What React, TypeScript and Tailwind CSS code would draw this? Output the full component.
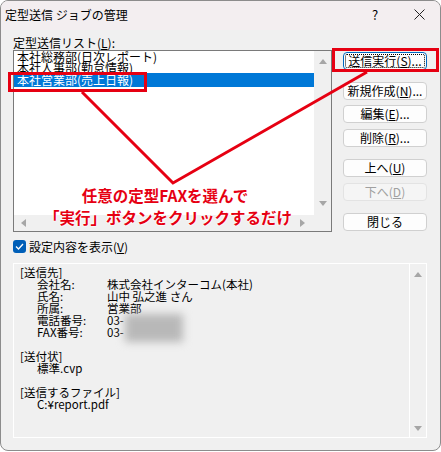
import React from "react";

const FONT = "font-['Noto_Sans_CJK_JP','Noto_Sans',sans-serif]";

function Tri({ dir }: { dir: "up" | "down" | "left" | "right" }) {
  const v = dir === "up" || dir === "down";
  const w = v ? 8 : 5;
  const h = v ? 5 : 8;
  const pts = {
    up: "0,5 4,0 8,5",
    down: "0,0 8,0 4,5",
    left: "5,0 5,8 0,4",
    right: "0,0 0,8 5,4",
  }[dir];
  return (
    <svg width={w} height={h} viewBox={`0 0 ${w} ${h}`}>
      <polygon points={pts} fill="#a6a6a6" />
    </svg>
  );
}

function Btn({
  children,
  className = "",
  primary = false,
  disabled = false,
}: {
  children: React.ReactNode;
  className?: string;
  primary?: boolean;
  disabled?: boolean;
}) {
  const tone = primary
    ? "border-[#0067c0] bg-[#fdfdfd] text-black"
    : disabled
    ? "border-[#e3e3e3] bg-[#f5f5f5] text-[#a0a0a0]"
    : "border-[#d0d0d0] bg-[#fdfdfd] text-black";
  return (
    <div
      className={`relative h-[18px] w-[84px] rounded-[4px] border flex items-center justify-center text-[12px] leading-none ${tone} ${className}`}
    >
      {primary && (
        <div className="absolute inset-[1px] border border-dotted border-black rounded-[2px]" />
      )}
      <span className="relative">{children}</span>
    </div>
  );
}

function DRow({ label, value, indent = true }: { label?: string; value?: React.ReactNode; indent?: boolean }) {
  return (
    <div className="flex h-[12px] leading-[12px] whitespace-nowrap">
      {indent && <div className="w-[17px]" />}
      {label !== undefined && <div className="w-[70px]">{label}</div>}
      {value !== undefined && <div>{value}</div>}
    </div>
  );
}

export default function App() {
  return (
    <div className={`relative w-[441px] h-[452px] bg-white ${FONT} text-black`}>
      <div className="w-[441px] h-[451px] rounded-[8px] border border-[#8c8c8c] bg-[#f0f0f0] overflow-hidden flex flex-col">
        {/* Title bar */}
        <div className="h-[29px] bg-[#f3eef0] flex items-center shrink-0">
          <div className="flex-1 pl-[4px] text-[12px] leading-none pb-[2px]">定型送信 ジョブの管理</div>
          <div className="w-[48px] flex justify-center text-[13px] leading-none pb-[2px]">?</div>
          <div className="w-[41px] flex justify-center pb-[2px]">
            <svg width="11" height="11" viewBox="0 0 11 11">
              <path d="M0.5 0.5 L10.5 10.5 M10.5 0.5 L0.5 10.5" stroke="#222" strokeWidth="1" />
            </svg>
          </div>
        </div>

        {/* Body */}
        <div className="pl-[12px] pr-[13px] pt-[6px] flex flex-col">
          <div className="h-[14px] text-[12px] leading-[14px]">
            定型送信リスト(<span className="underline">L</span>):
          </div>

          <div className="flex gap-[11px]">
            {/* List box */}
            <div className="w-[319px] h-[182px] border border-[#7a7a7a] bg-white flex flex-col">
              <div className="flex flex-1 min-h-0">
                <div className="flex-1 text-[12px] overflow-hidden">
                  <div className="h-[11px] leading-[11px] pl-[3px] whitespace-nowrap">本社総務部(日次レポート)</div>
                  <div className="h-[11px] leading-[11px] pl-[3px] whitespace-nowrap">本社人事部(勤怠情報)</div>
                  <div className="relative h-[14px] leading-[14px] pl-[3px] bg-[#0078d7] text-white whitespace-nowrap">本社営業部(売上日報)</div>
                </div>
                <div className="w-[17px] bg-[#f0f0f0] flex flex-col items-center justify-between pt-[8px] pb-[9px]">
                  <Tri dir="up" />
                  <Tri dir="down" />
                </div>
              </div>
              <div className="h-[16px] flex">
                <div className="flex-1 bg-[#f0f0f0] flex items-center justify-between pl-[7px] pr-[9px]">
                  <Tri dir="left" />
                  <Tri dir="right" />
                </div>
                <div className="w-[17px] bg-[#f0f0f0]" />
              </div>
            </div>

            {/* Buttons */}
            <div className="flex flex-col pt-[2px]">
              <Btn primary>
                送信実行(<span className="underline">S</span>)...
              </Btn>
              <Btn className="mt-[12px]">
                新規作成(<span className="underline">N</span>)...
              </Btn>
              <Btn className="mt-[5px]">
                編集(<span className="underline">E</span>)...
              </Btn>
              <Btn className="mt-[6px]">
                削除(<span className="underline">R</span>)...
              </Btn>
              <Btn className="mt-[12px]">
                上へ(<span className="underline">U</span>)
              </Btn>
              <Btn className="mt-[6px]" disabled>
                下へ(<span className="underline">D</span>)
              </Btn>
              <Btn className="mt-[12px]">閉じる</Btn>
            </div>
          </div>

          {/* Checkbox */}
          <div className="mt-[8px] h-[13px] flex items-center gap-[3px]">
            <div className="w-[13px] h-[13px] rounded-[3px] bg-[#005fb8] flex items-center justify-center">
              <svg width="9" height="7" viewBox="0 0 9 7">
                <path d="M1 3.5 L3.5 6 L8 1" stroke="white" strokeWidth="1.3" fill="none" />
              </svg>
            </div>
            <div className="text-[12px] leading-none">
              設定内容を表示(<span className="underline">V</span>)
            </div>
          </div>

          {/* Details */}
          <div className="relative mt-[10px] h-[175px] border border-white flex">
            <div className="flex-1 pl-[6px] pt-[2px] text-[11.5px]">
              <DRow indent={false} value="[送信先]" />
              <DRow label="会社名:" value="株式会社インターコム(本社)" />
              <DRow label="氏名:" value="山中 弘之進 さん" />
              <DRow label="所属:" value="営業部" />
              <DRow label="電話番号:" value="03-" />
              <DRow label="FAX番号:" value="03-" />
              <DRow indent={false} value="" />
              <DRow indent={false} value="[送付状]" />
              <DRow label="" value={<span className="-ml-[70px]">標準.cvp</span>} />
              <DRow indent={false} value="" />
              <DRow indent={false} value="[送信するファイル]" />
              <DRow label="" value={<span className="-ml-[70px]">C:¥report.pdf</span>} />
              <div className="absolute left-[111px] top-[50px] w-[58px] h-[28px] bg-[#b8b8b8] blur-[4px]" />
            </div>
            <div className="w-[17px] border-l border-white flex flex-col items-center justify-between pt-[8px] pb-[6px]">
              <Tri dir="up" />
              <Tri dir="down" />
            </div>
          </div>
        </div>
      </div>

      {/* Annotations */}
      <div className="absolute left-[8px] top-[72px] w-[139px] h-[20px] border-[3px] border-[#e60012]" />
      <div className="absolute left-[332px] top-[48px] w-[107px] h-[24px] border-[3px] border-[#e60012]" />
      <svg className="absolute left-0 top-0" width="441" height="452" viewBox="0 0 441 452">
        <polyline points="82,92 173,183 367,72" fill="none" stroke="#e60012" strokeWidth="3" />
      </svg>
      <div className="absolute left-[0px] top-[185px] w-[330px] text-center text-[15.5px] leading-[20px] font-bold text-[#e60012] whitespace-nowrap [text-shadow:0_0_2px_white,0_0_2px_white,0_0_2px_white]">
        任意の定型FAXを選んで
      </div>
      <div className="absolute left-[3px] top-[207px] w-[330px] text-center text-[15.5px] leading-[20px] font-bold text-[#e60012] whitespace-nowrap [text-shadow:0_0_2px_white,0_0_2px_white,0_0_2px_white]">
        「実行」ボタンをクリックするだけ
      </div>
    </div>
  );
}
